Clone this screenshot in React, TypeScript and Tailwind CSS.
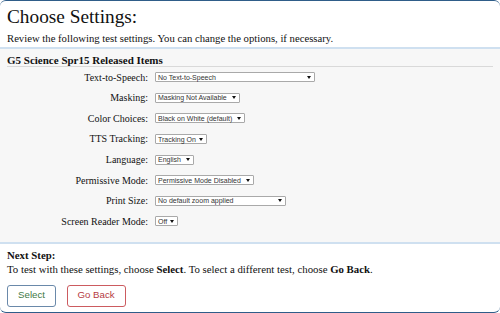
import React from "react";

function Arrow() {
  return (
    <svg width="4" height="3" viewBox="0 0 4 3" className="shrink-0">
      <path d="M0 0 L4 0 L2 3 Z" fill="#111" />
    </svg>
  );
}

function FakeSelect({ value, width }: { value: string; width: string }) {
  return (
    <div
      className={`${width} h-[10px] border border-[#a9a9a9] rounded-[1px] bg-white flex items-center justify-between pl-[2px] pr-[3px] text-[7px] leading-none text-[#333] font-['Liberation_Sans',Arial,sans-serif]`}
    >
      <span className="whitespace-nowrap">{value}</span>
      <Arrow />
    </div>
  );
}

const rows: { label: string; value: string; width: string }[] = [
  { label: "Text-to-Speech:", value: "No Text-to-Speech", width: "w-[160px]" },
  { label: "Masking:", value: "Masking Not Available", width: "w-[85px]" },
  { label: "Color Choices:", value: "Black on White (default)", width: "w-[90px]" },
  { label: "TTS Tracking:", value: "Tracking On", width: "w-[52px]" },
  { label: "Language:", value: "English", width: "w-[39px]" },
  { label: "Permissive Mode:", value: "Permissive Mode Disabled", width: "w-[99px]" },
  { label: "Print Size:", value: "No default zoom applied", width: "w-[131px]" },
  { label: "Screen Reader Mode:", value: "Off", width: "w-[23px]" },
];

export default function App() {
  return (
    <div className="w-[500px] h-[313px] overflow-hidden bg-white">
      <div className="h-[313px] flex flex-col border-t border-b border-[#2f5d89] rounded-[6px] bg-white text-[#111] font-['Liberation_Serif','Times_New_Roman',serif]">
        <div className="pl-[7px] pt-[5px] h-[46px]">
          <div className="text-[19.3px] leading-[22px] font-['Liberation_Serif',serif]">Choose Settings:</div>
          <div className="text-[10.7px] leading-[13px] mt-[4px]">
            Review the following test settings. You can change the options, if necessary.
          </div>
        </div>
        <div className="h-[197px] border-t-2 border-b-2 border-[#cfe0f0] bg-[#f7f7f7] px-[7px]">
          <div className="pt-[5px] border-b border-[#d9d9d9] text-[11px] font-bold leading-[12px]">
            G5 Science Spr15 Released Items
          </div>
          <div className="flex flex-col">
            {rows.map((r) => (
              <div key={r.label} className="h-[20.6px] flex items-center gap-[7px]">
                <div className="w-[141px] text-right text-[10px] leading-[11.5px]">{r.label}</div>
                <FakeSelect value={r.value} width={r.width} />
              </div>
            ))}
          </div>
        </div>
        <div className="pl-[7px] pt-[5px]">
          <div className="text-[10.8px] font-bold leading-[13.5px]">Next Step:</div>
          <div className="text-[10.8px] leading-[13.5px]">
            To test with these settings, choose <b>Select</b>. To select a different test, choose <b>Go Back</b>.
          </div>
          <div className="flex gap-[10.5px] mt-[9px] text-[9.7px] font-['Liberation_Sans',Arial,sans-serif]">
            <button className="w-[49px] h-[21.5px] border border-[#6a89aa] rounded-[3px] text-[#3f7a45] bg-white">
              Select
            </button>
            <button className="w-[59px] h-[21.5px] border border-[#cc5b60] rounded-[3px] text-[#b53a3f] bg-white">
              Go Back
            </button>
          </div>
        </div>
      </div>
    </div>
  );
}
